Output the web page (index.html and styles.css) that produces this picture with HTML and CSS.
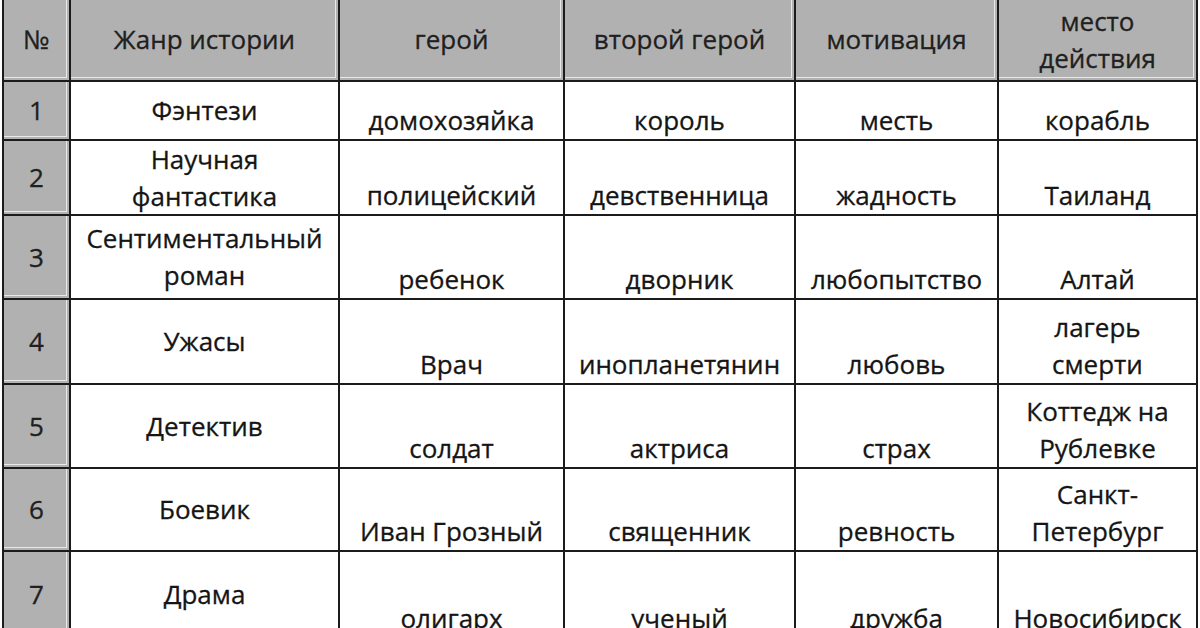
FILE: index.html
```html
<!DOCTYPE html>
<html lang="ru">
<head>
<meta charset="utf-8">
<title>Таблица</title>
<link rel="stylesheet" href="styles.css">
</head>
<body>
<div class="sheet">
  <div class="grid">
    <div class="cell gray mid"><span>№</span></div>
    <div class="cell gray mid"><span>Жанр истории</span></div>
    <div class="cell gray mid"><span>герой</span></div>
    <div class="cell gray mid"><span>второй герой</span></div>
    <div class="cell gray mid"><span>мотивация</span></div>
    <div class="cell gray mid"><span>место<br>действия</span></div>

    <div class="cell gray mid"><span>1</span></div>
    <div class="cell mid"><span>Фэнтези</span></div>
    <div class="cell bot"><span>домохозяйка</span></div>
    <div class="cell bot"><span>король</span></div>
    <div class="cell bot"><span>месть</span></div>
    <div class="cell bot"><span>корабль</span></div>

    <div class="cell gray mid"><span>2</span></div>
    <div class="cell mid"><span>Научная<br>фантастика</span></div>
    <div class="cell bot"><span>полицейский</span></div>
    <div class="cell bot"><span>девственница</span></div>
    <div class="cell bot"><span>жадность</span></div>
    <div class="cell bot"><span>Таиланд</span></div>

    <div class="cell gray mid"><span>3</span></div>
    <div class="cell mid"><span>Сентиментальный<br>роман</span></div>
    <div class="cell bot"><span>ребенок</span></div>
    <div class="cell bot"><span>дворник</span></div>
    <div class="cell bot"><span>любопытство</span></div>
    <div class="cell bot"><span>Алтай</span></div>

    <div class="cell gray mid"><span>4</span></div>
    <div class="cell mid"><span>Ужасы</span></div>
    <div class="cell bot"><span>Врач</span></div>
    <div class="cell bot"><span>инопланетянин</span></div>
    <div class="cell bot"><span>любовь</span></div>
    <div class="cell bot"><span>лагерь<br>смерти</span></div>

    <div class="cell gray mid"><span>5</span></div>
    <div class="cell mid"><span>Детектив</span></div>
    <div class="cell bot"><span>солдат</span></div>
    <div class="cell bot"><span>актриса</span></div>
    <div class="cell bot"><span>страх</span></div>
    <div class="cell bot"><span>Коттедж на<br>Рублевке</span></div>

    <div class="cell gray mid"><span>6</span></div>
    <div class="cell mid"><span>Боевик</span></div>
    <div class="cell bot"><span>Иван Грозный</span></div>
    <div class="cell bot"><span>священник</span></div>
    <div class="cell bot"><span>ревность</span></div>
    <div class="cell bot"><span>Санкт-<br>Петербург</span></div>

    <div class="cell gray mid"><span>7</span></div>
    <div class="cell mid"><span>Драма</span></div>
    <div class="cell bot"><span>олигарх</span></div>
    <div class="cell bot"><span>ученый</span></div>
    <div class="cell bot"><span>дружба</span></div>
    <div class="cell bot"><span>Новосибирск</span></div>
  </div>
</div>
</body>
</html>
```

FILE: styles.css
```css
html, body {
  margin: 0;
  padding: 0;
  background: #ffffff;
  overflow: hidden;
}

body {
  font-family: "Open Sans", "Noto Sans", "DejaVu Sans", sans-serif;
}

.sheet {
  padding-left: 2px;
  margin-top: -3px;
}

.grid {
  display: grid;
  grid-template-columns: 65px 267px 223px 229px 201px 197px;
  grid-template-rows: 81px 57px 73px 82px 83px 82px 81px 85px;
  gap: 2px;
  padding: 2px;
  background: #1b1b1b;
  width: max-content;
}

.cell {
  display: flex;
  justify-content: center;
  text-align: center;
  background: #ffffff;
  color: #151515;
  font-size: 26px;
  line-height: 37px;
  white-space: nowrap;
  -webkit-text-stroke: 0.3px #151515;
}

.gray {
  background: #b1b1b1;
  color: #202020;
  -webkit-text-stroke: 0.3px #202020;
  box-shadow: inset -2px -2px 0 #b1b1b1, inset -3px -3px 0 #e9e9e9;
}

.mid {
  align-items: center;
}

.bot {
  align-items: flex-end;
  padding-bottom: 0;
}
```
